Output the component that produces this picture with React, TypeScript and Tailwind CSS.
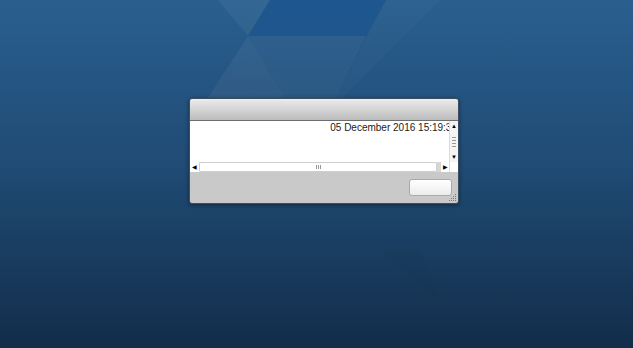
import React from "react";

const font = { fontFamily: '"Liberation Sans", Arial, sans-serif' };

const Backdrop = () => (
  <svg
    className="absolute inset-0 pointer-events-none"
    width="633"
    height="348"
    viewBox="0 0 633 348"
  >
    <polygon points="218,0 270,0 248,36" fill="#ffffff" opacity="0.05" />
    <polygon points="270,0 386,0 366,36 248,36" fill="#16528f" opacity="0.55" />
    <polygon points="248,36 366,36 330,110 292,110" fill="#ffffff" opacity="0.035" />
    <polygon points="248,36 200,110 292,110" fill="#ffffff" opacity="0.05" />
    <polygon points="386,0 440,0 330,110" fill="#ffffff" opacity="0.02" />
    <polygon points="380,250 420,250 440,300" fill="#000000" opacity="0.015" />
  </svg>
);

const VScroll = () => (
  <div className="w-[9px] flex flex-col items-center justify-between bg-[#f4f4f4] border-l border-[#dcdcdc] py-[2px]">
    <span className="text-[6px] leading-none text-black">▲</span>
    <div className="flex flex-col gap-[2px] items-center">
      <span className="block w-[4px] h-px bg-[#999]" />
      <span className="block w-[4px] h-px bg-[#999]" />
      <span className="block w-[4px] h-px bg-[#999]" />
      <span className="block w-[4px] h-px bg-[#999]" />
    </div>
    <span className="text-[6px] leading-none text-black">▼</span>
  </div>
);

const HScroll = () => (
  <div className="h-[10px] flex items-stretch bg-[#e8e8e8]">
    <div className="w-[9px] flex items-center justify-center bg-white">
      <span className="text-[6px] leading-none text-black">◀</span>
    </div>
    <div className="flex-1 flex items-center justify-center bg-white border border-[#cfcfcf] rounded-[2px]">
      <div className="flex gap-[1px]">
        <span className="block w-px h-[4px] bg-[#999]" />
        <span className="block w-px h-[4px] bg-[#999]" />
        <span className="block w-px h-[4px] bg-[#999]" />
      </div>
    </div>
    <div className="w-[4px] bg-[#d6d6d6]" />
    <div className="w-[8px] flex items-center justify-center bg-white">
      <span className="text-[6px] leading-none text-black">▶</span>
    </div>
    <div className="w-[9px] bg-white border-l border-[#dcdcdc]" />
  </div>
);

const Grip = () => (
  <svg width="8" height="8" viewBox="0 0 8 8" className="absolute right-[1px] bottom-[1px]">
    <rect x="6" y="0" width="1" height="1" fill="#777" />
    <rect x="4" y="2" width="1" height="1" fill="#777" />
    <rect x="6" y="2" width="1" height="1" fill="#777" />
    <rect x="2" y="4" width="1" height="1" fill="#777" />
    <rect x="4" y="4" width="1" height="1" fill="#777" />
    <rect x="6" y="4" width="1" height="1" fill="#777" />
    <rect x="0" y="6" width="1" height="1" fill="#777" />
    <rect x="2" y="6" width="1" height="1" fill="#777" />
    <rect x="4" y="6" width="1" height="1" fill="#777" />
    <rect x="6" y="6" width="1" height="1" fill="#777" />
  </svg>
);

export default function App() {
  return (
    <div
      className="relative w-[633px] h-[348px] overflow-hidden bg-gradient-to-b from-[#2a5f8f] via-[#1f4a73] to-[#132d4a]"
      style={font}
    >
      <Backdrop />
      <div className="relative pt-[98px] pl-[189px]">
        {/* Dialog */}
        <div className="relative w-[270px] h-[106px] flex flex-col rounded-[3px] overflow-hidden border border-[#3c4e60] shadow-[0_1px_4px_rgba(0,0,0,0.45)]">
          <div className="h-[22px] bg-gradient-to-b from-[#ececec] to-[#bcbcbc] border-b border-[#6e6e6e]" />
          <div className="h-[41px] flex bg-white">
            <div className="flex-1 flex justify-end overflow-hidden pt-[1px]">
              <span className="text-[10px] leading-[12px] text-[#222] whitespace-nowrap -mr-[8px]">
                05 December 2016 15:19:34
              </span>
            </div>
            <VScroll />
          </div>
          <HScroll />
          <div className="flex-1 flex justify-end items-start bg-[#c9c9c9] pt-[7px] pr-[6px]">
            <button className="w-[43px] h-[17px] rounded-[3px] border border-[#a9a9a9] bg-gradient-to-b from-white to-[#ececec]" />
          </div>
          <Grip />
        </div>
      </div>
    </div>
  );
}
